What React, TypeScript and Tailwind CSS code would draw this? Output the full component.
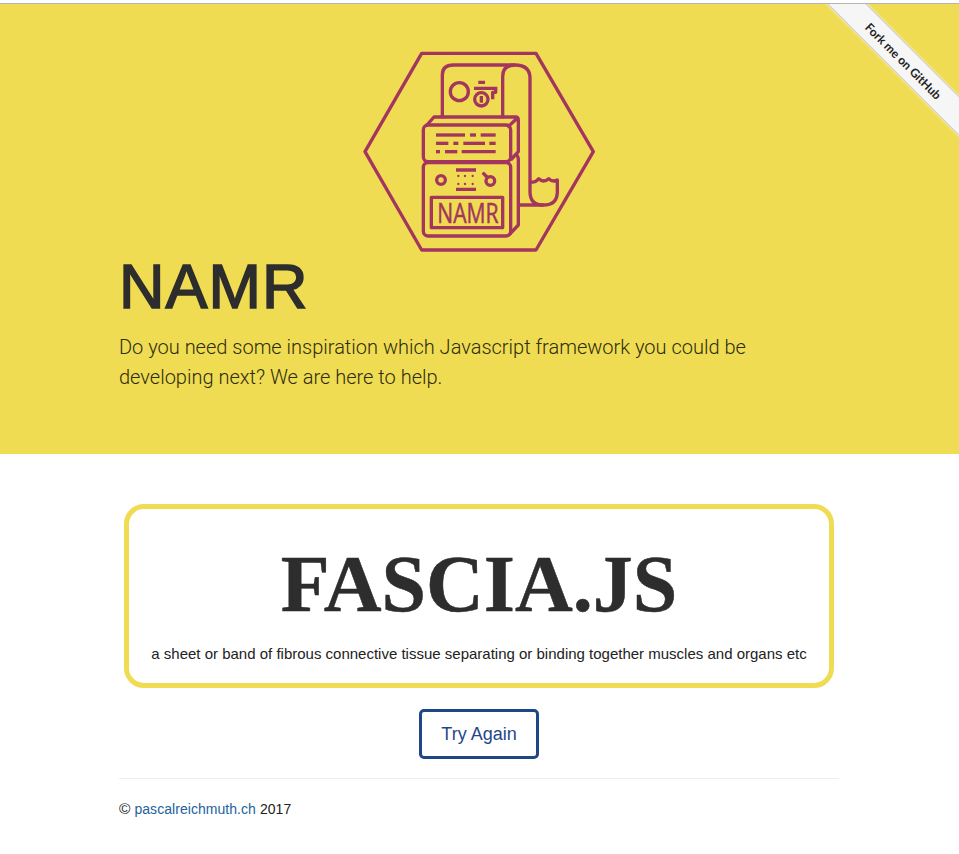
export default function App() {
  const c = "#a3355f";
  const lines = [
    "M258 285H345","M360 285H378","M392 285H437",
    "M258 310H295","M310 310H325","M340 310H405","M418 310H437",
    "M258 335H270","M285 335H322","M335 335H437",
  ];
  const dots = [325,345,368].flatMap((x) => [408,432].map((y) => [x,y]));
  return (
    <div className="min-h-[854px] bg-white text-[#2d2d2d] font-['Liberation_Sans',Arial,sans-serif]">
      <header className="relative mt-[3px] h-[451px] overflow-hidden border-t border-t-[#b5b5b0] bg-[#f0dc52]">
        <div className="absolute left-[803px] top-[42px] flex h-[28px] w-[200px] rotate-45 items-center justify-center border-y border-[#c9c9c9] bg-[#f6f6f6] font-['Lato',sans-serif] text-[12px] font-bold text-[#222] shadow-[0_0_3px_rgba(255,255,255,0.8)]">
          <span className="translate-x-[1px] translate-y-[1px]">Fork me on GitHub</span>
        </div>
        <div className="ml-[119px] w-[720px]">
          <svg viewBox="0 0 780 660" className="ml-[231px] mt-[36px] block h-[220px] w-[260px]" fill="none" stroke={c} strokeWidth="10" strokeLinejoin="round">
            <path d="M215 40H558L730 335L558 630H215L45 335Z" />
            <path d="M277 235V105Q277 75 310 75H495Q540 75 540 115V455Q540 495 580 495Q622 495 622 455V420Q608 428 596 416Q580 430 566 416Q555 430 540 425" />
            <path d="M458 235V110Q458 75 495 75M510 495H580" />
            <circle cx="328" cy="155" r="27" />
            <path d="M385 127H405M372 145H442M437 145V157H428V178" />
            <circle cx="394" cy="178" r="20" />
            <path d="M394 168V188" />
            <rect x="220" y="255" width="262" height="110" rx="14" />
            <path d="M228 258L252 231H497Q505 231 505 240V335L482 360M472 262L500 236" />
            <rect x="220" y="368" width="262" height="220" rx="14" />
            <path d="M497 342Q505 348 505 358V555L478 584" />
            {lines.map((d) => <path key={d} d={d} />)}
            <circle cx="273" cy="420" r="13" />
            <circle cx="421" cy="423" r="13" />
            <path d="M398 398L414 414M318 390H378M318 448H378" />
            {dots.map(([x,y]) => <circle key={`${x}-${y}`} cx={x} cy={y} r="3.5" fill={c} stroke="none" />)}
            <rect x="244" y="472" width="214" height="91" />
            <text x="262" y="548" fill={c} stroke={c} strokeWidth="1.5" fontFamily="'Open Sans', sans-serif" fontSize="80" textLength="184" lengthAdjust="spacingAndGlyphs">NAMR</text>
          </svg>
          <h1 className="mt-[-8px] text-[63px] font-normal leading-[69px] tracking-[1px] [-webkit-text-stroke:1.6px_#2d2d2d]">NAMR</h1>
          <p className="mt-[11px] w-[680px] font-['Roboto',sans-serif] text-[20px] font-light leading-[30px] text-[#2d2d10]">
            Do you need some inspiration which Javascript framework you could be developing next? We are here to help.
          </p>
        </div>
      </header>
      <main className="ml-[119px] w-[720px]">
        <section className="mx-[5px] mt-[50px] flex h-[184px] flex-col items-center rounded-[20px] border-[5px] border-[#f0dc52]">
          <h2 className="mt-[27px] font-['Liberation_Serif',serif] text-[80px] font-bold leading-[96px] [-webkit-text-stroke:0.5px_#2d2d2d]">FASCIA.JS</h2>
          <p className="mt-[12px] text-[15px] leading-[20px] text-[#222]">a sheet or band of fibrous connective tissue separating or binding together muscles and organs etc</p>
        </section>
        <div className="mt-[21px] flex justify-center">
          <button className="h-[50px] w-[120px] rounded-[5px] border-[3px] border-[#1f4788] text-[18px] text-[#1f4788]">Try Again</button>
        </div>
        <hr className="mt-[19px] border-[#eeeeee]" />
        <footer className="mt-[20px] text-[14px] leading-[20px] tracking-[0.05px] text-[#222]">
          <span className="text-[15.5px]">©</span> <a className="text-[#23629e]">pascalreichmuth.ch</a> 2017
        </footer>
      </main>
    </div>
  );
}
